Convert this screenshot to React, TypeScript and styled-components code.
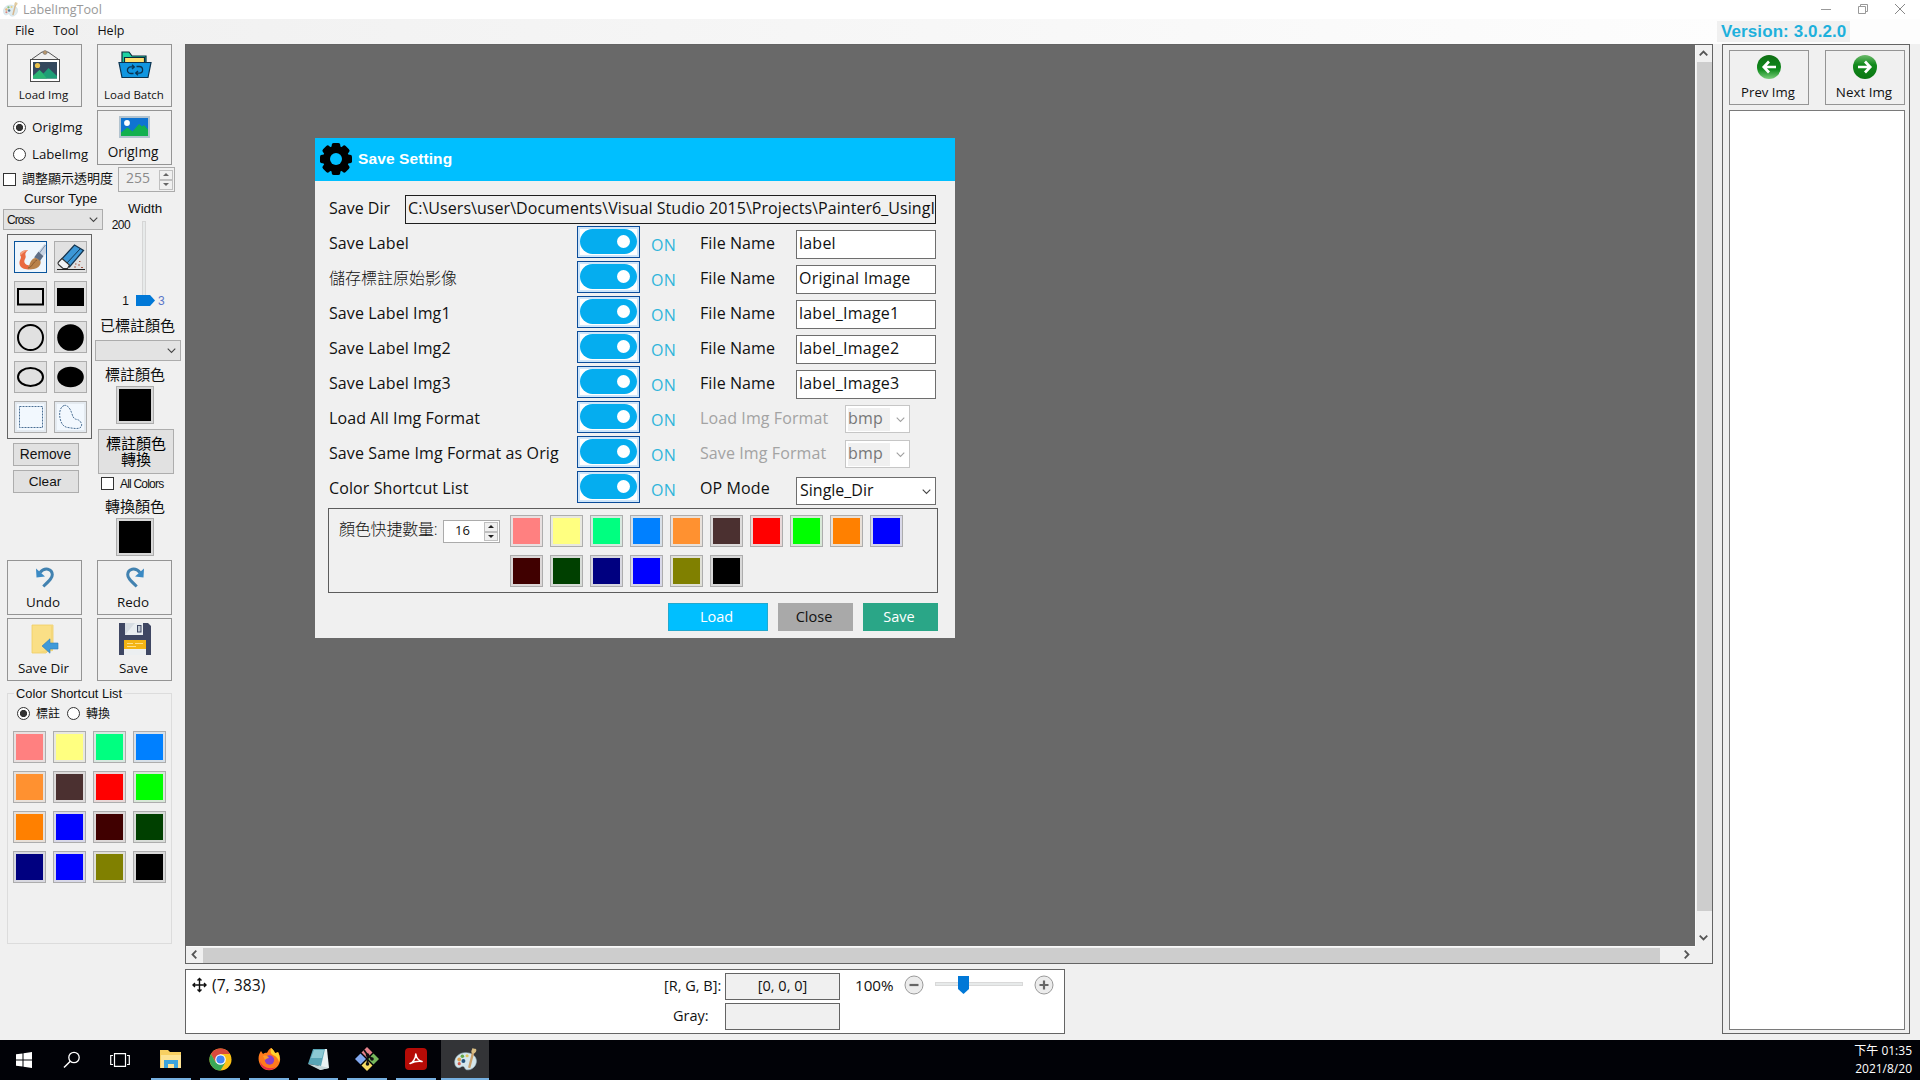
import React from "react";
import styled, { createGlobalStyle } from "styled-components";

const ui = `"Open Sans", "Noto Sans CJK TC", sans-serif`;
const arial = `"Liberation Sans", "Noto Sans CJK TC", sans-serif`;

const Global = createGlobalStyle`
  * { box-sizing: border-box; }
  html, body { margin: 0; padding: 0; background: #f0f0f0; }
  body { width: 1920px; height: 1080px; overflow: hidden; font-family: ${ui}; color: #000; }
  svg { display: block; flex: none; }
`;

type TextProps = { $size?: number; $ls?: number; $color?: string; $weight?: number; $arial?: boolean; $ml?: number; $mr?: number; $mt?: number; $h?: number; $w?: number };
const Text = styled.span<TextProps>`
  display: block;
  flex: none;
  white-space: pre;
  font-family: ${(p) => (p.$arial ? arial : ui)};
  font-size: ${(p) => p.$size ?? 16}px;
  font-weight: ${(p) => p.$weight ?? 400};
  letter-spacing: ${(p) => p.$ls ?? 0}px;
  color: ${(p) => p.$color ?? "#111"};
  line-height: ${(p) => p.$h ?? 20}px;
  height: ${(p) => p.$h ?? 20}px;
  margin-left: ${(p) => p.$ml ?? 0}px;
  margin-right: ${(p) => p.$mr ?? 0}px;
  margin-top: ${(p) => p.$mt ?? 0}px;
  width: ${(p) => (p.$w ? `${p.$w}px` : "auto")};
`;
const TwoLines = styled.span`
  white-space: pre;
  text-align: center;
  font-family: ${ui};
  font-size: 15px;
  line-height: 16px;
  height: 34px;
  color: #000;
`;

const Screen = styled.div`
  width: 1920px;
  height: 1080px;
  display: flex;
  flex-direction: column;
  background: #f0f0f0;
`;
const TitleBar = styled.header`
  height: 19px;
  background: #fff;
  display: flex;
  align-items: center;
  padding: 0 14px 0 3px;
`;
const WindowButtons = styled.div`
  margin-left: auto;
  display: flex;
  gap: 25px;
  padding-bottom: 2px;
`;
const MenuBar = styled.nav`
  height: 25px;
  display: flex;
  align-items: flex-start;
  padding: 2px 70px 0 15px;
  background: linear-gradient(90deg, #f0f0f0 0%, #fdfdfd 90%);
`;
const VersionTag = styled.div`
  margin-left: auto;
  width: 133px;
  height: 21px;
  padding: 1px 0 0 4px;
  background: #f0f0f0;
`;
const Main = styled.main`
  height: 996px;
  display: flex;
`;
const Sidebar = styled.aside`
  width: 185px;
  flex: none;
  display: flex;
  flex-direction: column;
`;
const PairRow = styled.div<{ $h: number }>`
  height: ${(p) => p.$h}px;
  flex: none;
  display: flex;
  align-items: flex-start;
  gap: 15px;
  padding-left: 7px;
`;
const BigButton = styled.button<{ $h: number; $w?: number; $pt: number; $mt?: number }>`
  width: ${(p) => p.$w ?? 75}px;
  height: ${(p) => p.$h}px;
  flex: none;
  border: 1px solid #949494;
  background: #f0f0f0;
  margin: ${(p) => p.$mt ?? 0}px 0 0;
  padding: ${(p) => p.$pt}px 0 0;
  display: flex;
  flex-direction: column;
  align-items: center;
  justify-content: space-between;
`;
const ModeRow = styled.div`
  height: 60px;
  flex: none;
  display: flex;
`;
const Radios = styled.div`
  width: 97px;
  flex: none;
  padding: 10px 0 0 13px;
  display: flex;
  flex-direction: column;
  gap: 7px;
`;
const Line = styled.div<{ $h?: number; $pl?: number; $gap?: number }>`
  display: flex;
  align-items: center;
  flex: none;
  height: ${(p) => p.$h ?? 20}px;
  padding-left: ${(p) => p.$pl ?? 0}px;
  gap: ${(p) => p.$gap ?? 0}px;
`;
const Dot = styled.span<{ $on?: boolean; $ml?: number }>`
  width: 13px;
  height: 13px;
  flex: none;
  margin-left: ${(p) => p.$ml ?? 0}px;
  border-radius: 50%;
  border: 1px solid #333;
  background: ${(p) => (p.$on ? "radial-gradient(circle, #333 0 3.2px, #fff 4px)" : "#fff")};
`;
const Check = styled.span`
  width: 13px;
  height: 13px;
  flex: none;
  border: 1px solid #333;
  background: #fff;
`;
const Spinner = styled.div<{ $w: number; $h: number; $bg: string }>`
  width: ${(p) => p.$w}px;
  height: ${(p) => p.$h}px;
  flex: none;
  border: 1px solid #ababab;
  background: ${(p) => p.$bg};
  display: flex;
  align-items: center;
  justify-content: space-between;
  padding: 0 1px 0 7px;
`;
const SpinKeys = styled.div<{ $h: number }>`
  width: 14px;
  display: flex;
  flex-direction: column;
  height: ${(p) => p.$h}px;
`;
const SpinKey = styled.span`
  flex: 1;
  border: 1px solid #c0c0c0;
  background: #f0f0f0;
  display: flex;
  align-items: center;
  justify-content: center;
`;
const Tools = styled.section`
  height: 368px;
  flex: none;
  display: flex;
`;
const ToolsLeft = styled.div`
  width: 95px;
  flex: none;
  display: flex;
  flex-direction: column;
  align-items: flex-start;
`;
const ToolsRight = styled.div`
  width: 90px;
  flex: none;
  display: flex;
  flex-direction: column;
  align-items: flex-start;
`;
const Combo = styled.div<{ $w: number; $h: number; $bg?: string; $bd?: string; $ml?: number; $mt?: number }>`
  width: ${(p) => p.$w}px;
  height: ${(p) => p.$h}px;
  margin-left: ${(p) => p.$ml ?? 0}px;
  margin-top: ${(p) => p.$mt ?? 0}px;
  flex: none;
  border: 1px solid ${(p) => p.$bd ?? "#acacac"};
  background: ${(p) => p.$bg ?? "#e3e3e3"};
  display: flex;
  align-items: center;
  justify-content: space-between;
  padding: 0 4px 0 3px;
`;
const ToolGrid = styled.div`
  margin: 4px 0 0 7px;
  width: 85px;
  height: 205px;
  flex: none;
  border: 1px solid #646464;
  padding: 6px;
  display: grid;
  grid-template-columns: 33px 33px;
  grid-auto-rows: 32px;
  gap: 8px 7px;
`;
const ToolButton = styled.button<{ $active?: boolean; $pale?: boolean }>`
  padding: 0;
  border: 1px solid ${(p) => (p.$active ? "#0a559c" : "#adadad")};
  background: ${(p) => (p.$active ? "#eef6fd" : p.$pale ? "#e4eaf0" : "#e1e1e1")};
  display: flex;
  align-items: center;
  justify-content: center;
`;
const FlatButton = styled.button<{ $w: number; $h: number; $ml: number; $mt: number }>`
  width: ${(p) => p.$w}px;
  height: ${(p) => p.$h}px;
  margin: ${(p) => p.$mt}px 0 0 ${(p) => p.$ml}px;
  flex: none;
  padding: 0;
  border: 1px solid #adadad;
  background: #e1e1e1;
  display: flex;
  flex-direction: column;
  align-items: center;
  justify-content: center;
`;
const Swatch = styled.button<{ $c: string; $w?: number; $h?: number; $ml?: number; $mt?: number }>`
  width: ${(p) => p.$w ?? 33}px;
  height: ${(p) => p.$h ?? 32}px;
  margin: ${(p) => p.$mt ?? 0}px 0 0 ${(p) => p.$ml ?? 0}px;
  flex: none;
  border: 1px solid #adadad;
  padding: 2px;
  background: ${(p) => `color-mix(in srgb, ${p.$c} 6%, #e6e6e6)`};
  display: flex;

  &::before {
    content: "";
    flex: 1;
    background: ${(p) => p.$c};
  }
`;
const WidthSlider = styled.div`
  height: 90px;
  flex: none;
  display: grid;
  grid-template-columns: 36px 23px 20px;
  padding-top: 2px;
`;
const SliderEnds = styled.div<{ $end?: boolean }>`
  display: flex;
  flex-direction: column;
  justify-content: ${(p) => (p.$end ? "flex-end" : "space-between")};
  align-items: ${(p) => (p.$end ? "flex-start" : "flex-end")};
`;
const SliderTrack = styled.div`
  position: relative;
  width: 4px;
  height: 80px;
  margin: 2px 0 0 11px;
  border: 1px solid #d6d6d6;
  background: #e7eaea;
`;
const Thumb = styled.svg`
  position: absolute;
  left: -7px;
  bottom: -6px;
`;
const Group = styled.fieldset`
  margin: 4px 0 0 7px;
  width: 165px;
  height: 259px;
  flex: none;
  border: 1px solid #dcdcdc;
  padding: 0 0 0 5px;
  min-width: 0;
`;
const Legend = styled.legend`
  margin-left: 1px;
  padding: 0 2px;
  height: 17px;
`;
const PaletteGrid = styled.div<{ $cols: number; $mt?: number }>`
  display: grid;
  margin-top: ${(p) => p.$mt ?? 0}px;
  grid-template-columns: repeat(${(p) => p.$cols}, 33px);
  grid-auto-rows: 32px;
  gap: 8px 7px;
`;

const Center = styled.div`
  width: 1528px;
  flex: none;
  display: flex;
  flex-direction: column;
  align-items: flex-start;
  gap: 5px;
`;
const Viewport = styled.section`
  position: relative;
  width: 1528px;
  height: 920px;
  border: 1px solid #646464;
  display: grid;
  grid-template-columns: 1fr 17px;
  grid-template-rows: 1fr 17px;
  background: #f0f0f0;
`;
const Canvas = styled.div`
  background: #696969;
`;
const ScrollV = styled.div`
  display: flex;
  flex-direction: column;
  align-items: center;
  border-left: 1px solid #f8f8f8;
`;
const ScrollH = styled.div`
  display: flex;
  align-items: center;
  border-top: 1px solid #f8f8f8;
`;
const ScrollKey = styled.span<{ $last?: "v" | "h" }>`
  width: 17px;
  height: 17px;
  flex: none;
  margin-top: ${(p) => (p.$last === "v" ? "auto" : 0)};
  margin-left: ${(p) => (p.$last === "h" ? "auto" : 0)};
  padding-right: 1px;
  padding-bottom: 1px;
  display: flex;
  align-items: center;
  justify-content: center;
`;
const BarV = styled.span`
  width: 15px;
  height: 849px;
  background: #cdcdcd;
`;
const BarH = styled.span`
  width: 1457px;
  height: 15px;
  background: #cdcdcd;
`;
const Status = styled.footer`
  width: 880px;
  height: 65px;
  border: 1px solid #646464;
  background: #fff;
  display: flex;
`;
const StatusPos = styled.div`
  width: 472px;
  padding: 5px 0 0 6px;
  display: flex;
  gap: 5px;
`;
const Readouts = styled.div`
  width: 186px;
  display: flex;
  flex-direction: column;
  gap: 3px;
  padding-top: 3px;
`;
const Readout = styled.div`
  display: flex;
  align-items: center;
  height: 27px;
`;
const ReadLabel = styled.div`
  width: 67px;
  padding-bottom: 2px;
`;
const ReadBox = styled.div`
  width: 115px;
  height: 27px;
  border: 1px solid #646464;
  background: #f0f0f0;
  display: flex;
  align-items: center;
  justify-content: center;
  padding-bottom: 2px;
`;
const Zoom = styled.div`
  display: flex;
  align-items: center;
  height: 30px;
  padding-left: 11px;
`;
const ZoomTrack = styled.div`
  position: relative;
  width: 88px;
  height: 4px;
  margin: -3px 11px 0;
  background: #e7eaea;
  border: 1px solid #d9d9d9;
`;
const ZoomThumb = styled.svg`
  position: absolute;
  left: 22px;
  top: -7px;
`;
const RightPanel = styled.aside`
  margin-left: 9px;
  width: 188px;
  height: 990px;
  border: 1px solid #646464;
  padding: 5px 4px 3px 6px;
  display: flex;
  flex-direction: column;
  gap: 5px;
`;
const NavRow = styled.div`
  display: flex;
  justify-content: space-between;
  width: 176px;
`;
const FileList = styled.div`
  width: 176px;
  flex: 1;
  border: 1px solid #7a7a7a;
  background: #fff;
`;

const Dialog = styled.section`
  position: absolute;
  left: 129px;
  top: 93px;
  width: 640px;
  height: 500px;
  background: #f0f0f0;
  display: flex;
  flex-direction: column;
`;
const DialogHead = styled.header`
  height: 43px;
  flex: none;
  background: #00bfff;
  display: flex;
  align-items: center;
  padding: 0 0 1px 5px;
  gap: 6px;
`;
const DirRow = styled.div`
  display: flex;
  height: 45px;
  flex: none;
  padding: 14px 0 0 14px;
`;
const DirField = styled.div`
  width: 531px;
  height: 29px;
  border: 1px solid #1e1e1e;
  padding: 2px 1px 0 2px;
  overflow: hidden;
`;
const Setting = styled.div`
  height: 35px;
  flex: none;
  display: grid;
  grid-template-columns: 248px 74px 49px 1fr;
  padding-left: 14px;
  align-items: start;
`;
const ToggleBox = styled.button`
  width: 63px;
  height: 32px;
  padding: 0 0 1px 2px;
  border: 1px solid #0b4c9a;
  background: linear-gradient(#fff, #fff) 2px 2px / 57px 26px no-repeat, #cfe6fa;
  display: flex;
  align-items: center;
`;
const Pill = styled.span`
  width: 57px;
  height: 25px;
  border-radius: 13px;
  background: #05adef;
  display: flex;
  align-items: center;
  justify-content: flex-end;
  padding-right: 7px;
`;
const Knob = styled.span`
  width: 13px;
  height: 13px;
  border-radius: 50%;
  background: #fff;
`;
const Extra = styled.div`
  display: flex;
`;
const NameField = styled.div`
  width: 140px;
  height: 29px;
  margin-top: 4px;
  border: 1px solid #6e6e6e;
  background: #fff;
  padding: 1px 0 0 2px;
`;
const Greyed = styled.span`
  display: block;
  width: 42px;
  height: 23px;
  margin-left: -1px;
  background: #f0f0f0;
`;
const PalettePanel = styled.div`
  margin: 2px 0 0 13px;
  width: 610px;
  height: 85px;
  flex: none;
  border: 1px solid #5c5c5c;
  padding: 6px 0 0 10px;
  display: flex;
`;
const CountBox = styled.div`
  width: 171px;
  display: flex;
  padding-top: 5px;
`;
const Actions = styled.div`
  display: flex;
  justify-content: flex-end;
  gap: 10px;
  padding: 10px 17px 0 0;
`;
const Action = styled.button<{ $w: number; $bg: string; $bd: string }>`
  width: ${(p) => p.$w}px;
  height: 28px;
  padding: 0 3px 0 0;
  border: 1px solid ${(p) => p.$bd};
  background: ${(p) => p.$bg};
  display: flex;
  align-items: center;
  justify-content: center;
`;

const Taskbar = styled.div`
  height: 40px;
  background: #010207;
  display: flex;
`;
const SysKeys = styled.div`
  display: flex;
  width: 142px;
  flex: none;
`;
const SysKey = styled.span`
  width: 48px;
  height: 40px;
  flex: none;
  display: flex;
  align-items: center;
  justify-content: center;
`;
const AppKey = styled.span<{ $active?: boolean }>`
  width: ${(p) => (p.$active ? 48 : 40)}px;
  height: 40px;
  flex: none;
  margin-left: ${(p) => (p.$active ? 5 : 9)}px;
  display: flex;
  align-items: center;
  justify-content: center;
  border-bottom: 2px solid #76b0e0;
  background: ${(p) => (p.$active ? "#333437" : "transparent")};
`;
const Clock = styled.div`
  margin-left: auto;
  padding: 2px 8px 0 0;
  text-align: right;
`;
const Turned = styled.svg<{ $dir: number }>`
  transform: rotate(${(p) => p.$dir}deg);
`;
const Mirrored = styled.svg<{ $flip: boolean }>`
  transform: ${(p) => (p.$flip ? "scaleX(-1)" : "none")};
`;

const Chevron = ({ c = "#444", dir = 0, s = 1.2 }: { c?: string; dir?: number; s?: number }) => (
  <Turned $dir={dir} width="9" height="9" viewBox="0 0 10 10">
    <path d="M0.8 3 L5 7.2 L9.2 3" fill="none" stroke={c} strokeWidth={s} />
  </Turned>
);
const Arrows = ({ h, c = "#444" }: { h: number; c?: string }) => (
  <SpinKeys $h={h}>
    <SpinKey><svg width="6" height="3"><path d="M0 3 L3 0 L6 3Z" fill={c} /></svg></SpinKey>
    <SpinKey><svg width="6" height="3"><path d="M0 0 L3 3 L6 0Z" fill={c} /></svg></SpinKey>
  </SpinKeys>
);

const PaletteIcon = ({ size = 14, faded = false }: { size?: number; faded?: boolean }) => (
  <svg width={size} height={size} viewBox="0 0 22 22" opacity={faded ? 0.75 : 1}>
    <path d="M11 4.5C5 4.5 .7 8.800 .7 13.500c0 4 2.300 6 4.600 5.200 2-.7 2.500-1.900 4.200-.8 1.200.8.600 2.300 2.400 2.800 4.500 1.100 9.500-3 9.500-8.200 0-4.800-4.400-8-10.400-8z" fill="#d4e6ec" stroke="#a9c4cf" strokeWidth=".6" />
    <circle cx="5" cy="11" r="1.800" fill="#e0a04f" /><circle cx="8" cy="7.800" r="1.700" fill="#62a84c" />
    <circle cx="12.500" cy="7.400" r="1.500" fill="#dfc35a" /><circle cx="5" cy="15" r="1.500" fill="#d05c50" />
    <circle cx="9" cy="12.500" r="1.900" fill="#23537d" />
    <path d="M18.500 3.500 L14.500 19" stroke="#c9a06b" strokeWidth="2.200" />
    <path d="M16.800 4.500C16 2.500 17.500 1.500 17.800 0c1 1 2.500.3 3.400 1.300.7 1.500-.6 3.500-2 4z" fill="#d9bd84" />
  </svg>
);
const PictureFrame = () => (
  <svg width="32" height="34" viewBox="0 0 32 34">
    <path d="M3 10 L13 3 L19 3 L29 10" fill="none" stroke="#555" strokeWidth="1" />
    <circle cx="16" cy="3.500" r="2" fill="#b8966c" stroke="#777" strokeWidth=".6" />
    <rect x="1.500" y="10.500" width="29" height="22" fill="#fff" stroke="#4b4b4b" />
    <rect x="4" y="13" width="24" height="16.500" fill="#34495e" />
    <circle cx="8.500" cy="16.500" r="2.600" fill="#e8c14d" />
    <path d="M4 29.500V27l6.500-6 4 3.500 5-5.500L28 27v2.500z" fill="#1e9e76" />
    <path d="M4 29.500V27l6.500-6L18 29.500z" fill="#2bb673" />
  </svg>
);
const BatchFolder = () => (
  <svg width="34" height="30" viewBox="0 0 34 30">
    <path d="M4 14V2h7l3 4h14v9z" fill="#1ed3a2" stroke="#0b2a3c" strokeWidth="1.200" />
    <path d="M6.500 13V7.500h20V13" fill="#ffe070" stroke="#0b2a3c" strokeWidth="1.200" />
    <path d="M1 12.500h32l-3 15H4z" fill="#1196e0" stroke="#0b3350" strokeWidth="1.200" />
    <path d="M15.500 23.500h-2.700a3.300 3.300 0 0 1-.2-6.600h3.200M18.500 16.500h2.700a3.300 3.300 0 0 1 .2 6.600h-3.200M14 14.700l2.300 2.200-2.300 2.100M20 21l-2.300 2.100 2.300 2.200" fill="none" stroke="#0b3350" strokeWidth="1.300" />
  </svg>
);
const Photo = () => (
  <svg width="31" height="22" viewBox="0 0 31 22">
    <rect x="1" y="1" width="29" height="20" fill="#0f74d1" stroke="#b2c3cf" strokeWidth="2" />
    <circle cx="8" cy="7" r="2.900" fill="#fff" />
    <path d="M2 20v-3.500l6.500-5 5 4L20 8l3 2.500L25 9l4 4.500V20z" fill="#12b04f" />
  </svg>
);
const TurnArrow = ({ flip = false }: { flip?: boolean }) => (
  <Mirrored $flip={flip} width="20" height="22" viewBox="0 0 20 22">
    <path d="M5 6.500C10 .5 17 3 17.300 8.500c.1 3-1.800 5-9 12" fill="none" stroke="#4282b0" strokeWidth="3" />
    <path d="M1 2.500L1.500 11.500L10 10.500Z" fill="#3b8ac4" />
  </Mirrored>
);
const FolderArrow = () => (
  <svg width="28" height="30" viewBox="0 0 28 30">
    <path d="M1 1h21v21l-7 7H1z" fill="#fadf86" stroke="#f0cd62" strokeWidth=".8" />
    <path d="M4 29L22 27V1h-2v24z" fill="#f4d77a" />
    <path d="M11 22l8-7.200v4.200h8v6h-8v4.200z" fill="#3f9ad9" stroke="#2e7db8" strokeWidth=".6" />
  </svg>
);
const Floppy = () => (
  <svg width="32" height="32" viewBox="0 0 32 32">
    <path d="M0 0h29l3 3v29H0z" fill="#3f4763" />
    <rect x="6" y="0" width="18" height="12" fill="#d7dde3" /><path d="M6 12L16 0h8v12z" fill="#e9edf0" />
    <rect x="18.500" y="2.500" width="3.500" height="6.500" fill="#c3cbd3" stroke="#3f4763" />
    <rect x="5" y="17" width="22" height="15" fill="#eceff1" /><rect x="5" y="17" width="22" height="9" fill="#f3b414" />
    <path d="M8 20.500h6M16 20.500h8M8 23.500h9" stroke="#ffe08a" strokeWidth="1.200" />
  </svg>
);
const Brush = () => (
  <svg width="30" height="29" viewBox="0 0 30 29">
    <path d="M12 7C6 7 2.500 10.500 4.500 13c1.500 2-1.500 4-1 7.500.5 6 9 7 14 5l1-4c-4 2-9 1-10-2-1-3 2-4 1-7-.5-2 0-3 2.500-5.500z" fill="#ea6a41" />
    <path d="M12 7C7 7 3 9.500 4.500 12.500c2-2 4-4 7.500-5.500z" fill="#f3a384" />
    <path d="M11 25.500c3-1 2-9 8-10.500 4.500-.5 7 3 5 7-2.500 4.500-9 5-13 3.500z" fill="#b9824a" />
    <path d="M12 25c4-.5 5-6 9-8" fill="none" stroke="#8a5a30" strokeWidth="1" />
    <path d="M18 14.500l4.500-6 5 4.500-3.500 5c-1.500-2-3.500-3-6-3.500z" fill="#5f6f86" />
    <path d="M22.500 8.500L28.500 1l1.500 1v8l-2.500 3z" fill="#c9d5e4" />
    <path d="M29.500 2l-6 8" stroke="#7d90ab" strokeWidth="1" />
  </svg>
);
const Eraser = () => (
  <svg width="28" height="28" viewBox="0 0 28 28">
    <path d="M3 18L17.500 2l9 5.500L12.500 24z" fill="#3c97d6" stroke="#14344f" strokeWidth="1.300" />
    <path d="M9 21L23.500 5.500" stroke="#14344f" strokeWidth="1" />
    <path d="M5 15.500l7.500 6.500-2 3.500H6l-4.500-4c-.8-1 0-2.500.500-3z" fill="#f2f4f6" stroke="#333" strokeWidth="1.100" />
    <path d="M0 26.500h28" stroke="#222" strokeWidth="1" /><path d="M17 24h2M21 22h2M24 24.500h2M22 18.500h1.500M18 21h1.500" stroke="#a65a48" strokeWidth="1.200" />
  </svg>
);
const shapes = [
  <Brush key="b" />,
  <Eraser key="e" />,
  <svg key="r" width="29" height="20"><rect x="2" y="2" width="25" height="15.500" fill="none" stroke="#000" strokeWidth="2" /></svg>,
  <svg key="rf" width="29" height="20"><rect x="1" y="1" width="27" height="18" /></svg>,
  <svg key="c" width="29" height="29"><circle cx="14.500" cy="14.500" r="12.500" fill="none" stroke="#000" strokeWidth="2" /></svg>,
  <svg key="cf" width="29" height="29"><circle cx="14.500" cy="14.500" r="13.300" /></svg>,
  <svg key="o" width="29" height="22"><ellipse cx="14.500" cy="11" rx="12.500" ry="9" fill="none" stroke="#000" strokeWidth="2" /></svg>,
  <svg key="of" width="29" height="22"><ellipse cx="14.500" cy="11" rx="13.300" ry="10.300" /></svg>,
  <svg key="s" width="27" height="26"><rect width="27" height="26" fill="#f2f8fe" /><rect x="2.500" y="2.500" width="23" height="21" fill="none" stroke="#4a6f94" strokeDasharray="2 1" /></svg>,
  <svg key="l" width="27" height="26"><rect width="27" height="26" fill="#f2f8fe" /><path d="M7 1.500C3 3 2 9 3 14c1 5 3 9 8 9.500 5 .8 11 2 13-.5 2-3-1-7-4-7.500-4-.7-4-3-5.500-7C13 4 10 .5 7 1.500z" fill="none" stroke="#4a6f94" strokeDasharray="2 1" /></svg>,
];
const Gear = () => (
  <svg width="32" height="32" viewBox="-16 -16 32 32">
    {[0, 45, 90, 135].map((a) => (
      <rect key={a} x="-4.300" y="-16" width="8.600" height="32" rx="2" transform={`rotate(${a})`} />
    ))}
    <circle r="13.200" /><circle r="6" fill="#00bfff" />
  </svg>
);
const GreenArrow = ({ right = false }: { right?: boolean }) => (
  <Mirrored $flip={right} width="24" height="24" viewBox="0 0 24 24">
    <defs>
      <linearGradient id="orb" x1="0" y1="0" x2="0" y2="1">
        <stop offset="0" stopColor="#0f6e14" /><stop offset=".6" stopColor="#0f8a1b" /><stop offset="1" stopColor="#7ccf7c" />
      </linearGradient>
      <linearGradient id="orb2" x1="0" y1="0" x2="0" y2="1">
        <stop offset="0" stopColor="#6dbb6d" /><stop offset=".4" stopColor="#128a1c" /><stop offset="1" stopColor="#0a7612" />
      </linearGradient>
    </defs>
    <circle cx="12" cy="12" r="12" fill={right ? "url(#orb2)" : "url(#orb)"} />
    <path d="M12 6.500L6.800 12L12 17.500M7 12h12" fill="none" stroke="#fff" strokeWidth="2.700" />
  </Mirrored>
);
const RoundSign = ({ plus = false }: { plus?: boolean }) => (
  <svg width="20" height="20" viewBox="0 0 20 20">
    <circle cx="10" cy="10" r="9" fill="#ececec" stroke="#9a9a9a" />
    <path d={plus ? "M5.500 10h9M10 5.500v9" : "M5.500 10h9"} stroke="#666" strokeWidth="2.200" />
  </svg>
);

const apps = [
  <svg key="ex" width="22" height="20" viewBox="0 0 22 20"><path d="M0 1h8l2 2h11v16H0z" fill="#f7cf62" /><path d="M1 6h20v13H1z" fill="#fde394" /><path d="M4 19v-8h14v8h-4v-4H8v4z" fill="#3ba4dc" /></svg>,
  <svg key="ch" width="23" height="23" viewBox="-12 -12 24 24"><circle r="11.500" fill="#fbc116" /><path d="M-9.960-5.750A11.500 11.500 0 0 1 9.960-5.750L0-5.750L-5 3z" fill="#d94a3c" /><path d="M-9.960-5.750A11.500 11.500 0 0 0 0 11.500L5 3L-5 3z" fill="#3aa757" /><circle r="5.500" fill="#fff" /><circle r="4.300" fill="#4285f4" /></svg>,
  <svg key="ff" width="23" height="24" viewBox="0 0 23 24"><path d="M13 1c2 1 3 3 4 5 2 0 3-1 3-1 3 5 3 11-1 15-5 5-13 4-16-1C-.5 14 0 8 3 4l2 3c1-1 3-1.500 4-1.300C10 4 11 2 13 1z" fill="#ff7a1c" /><path d="M13 1c2 1 3 3 4 5 2 0 3-1 3-1 2 4 2 8 1 10-1-4-3-6-6-7-2-1-3-3-2-7z" fill="#ffd32e" /><path d="M2 14c2 6 9 9 16 6-5 5-12 3-15-1z" fill="#e8284c" /><circle cx="11.500" cy="13" r="4.700" fill="#8a3fc9" /><path d="M5 9c3-1 5 0 6 2-2 0-3 1-4 2z" fill="#ff9a2a" /></svg>,
  <svg key="np" width="23" height="22" viewBox="0 0 23 22"><path d="M7 1h13l2 19-9 2z" fill="#e9f1f2" /><path d="M6 1h12l-4 17-13-2z" fill="#58a4b5" /><path d="M7 2h10l-2 8H4z" fill="#8cc8d3" /><path d="M1 16l13 2 8 2-9 2z" fill="#c6d7da" /></svg>,
  <svg key="gt" width="24" height="24" viewBox="0 0 24 24"><path d="M12 0l5.500 5.500L12 11 6.500 5.500z" fill="#e5828c" /><path d="M18.500 6.500L24 12l-5.500 5.500L13 12z" fill="#76b75c" /><path d="M5.500 6.500L11 12l-5.500 5.500L0 12z" fill="#82a9f0" /><path d="M12 13l5.500 5.500L12 24l-5.500-5.500z" fill="#f7dc63" /><path d="M9 3l3.500 5v9M12.500 8l4.500 4" fill="none" stroke="#111" strokeWidth="1.800" /><circle cx="12.500" cy="8" r="1.800" fill="#111" /><circle cx="12.500" cy="17" r="1.800" fill="#111" /><circle cx="17" cy="12" r="1.800" fill="#111" /></svg>,
  <svg key="pdf" width="22" height="22" viewBox="0 0 22 22"><rect width="22" height="22" rx="4" fill="#b50b06" /><path d="M5 15.500c2.500-.5 6-5.500 5.800-9.500.6 4 2.500 6.500 6.200 7.500-3.500-.6-8 .2-12 2z" fill="none" stroke="#fff" strokeWidth="1.600" strokeLinejoin="round" /></svg>,
];

const palette = ["#ff8080", "#ffff80", "#00ff80", "#0080ff", "#ff9130", "#4b3030", "#ff0000", "#00ff00", "#ff8000", "#0000ff", "#400000", "#004000", "#000080", "#0000ff", "#808000", "#000000"];

const rows: { label: string; right: string; kind: "name" | "fmt" | "mode"; value: string }[] = [
  { label: "Save Label", right: "File Name", kind: "name", value: "label" },
  { label: "儲存標註原始影像", right: "File Name", kind: "name", value: "Original Image" },
  { label: "Save Label Img1", right: "File Name", kind: "name", value: "label_Image1" },
  { label: "Save Label Img2", right: "File Name", kind: "name", value: "label_Image2" },
  { label: "Save Label Img3", right: "File Name", kind: "name", value: "label_Image3" },
  { label: "Load All Img Format", right: "Load Img Format", kind: "fmt", value: "bmp" },
  { label: "Save Same Img Format as Orig", right: "Save Img Format", kind: "fmt", value: "bmp" },
  { label: "Color Shortcut List", right: "OP Mode", kind: "mode", value: "Single_Dir" },
];

const SettingRow = ({ label, right, kind, value }: (typeof rows)[number]) => {
  const cjk = label.charCodeAt(0) > 255;
  return (
    <Setting>
      <Text $mt={6} $h={22} $ls={cjk ? 0 : 0.1} $weight={cjk ? 300 : 400}>{label}</Text>
      <ToggleBox><Pill><Knob /></Pill></ToggleBox>
      <Text $mt={8} $h={22} $ls={0.4} $color="#2fb5db">ON</Text>
      <Extra>
        <Text $mt={6} $h={22} $ls={0.1} $w={kind === "fmt" ? 145 : 96} $color={kind === "fmt" ? "#a3a3a3" : "#111"}>{right}</Text>
        {kind === "name" && <NameField><Text $h={22} $ls={0.22}>{value}</Text></NameField>}
        {kind === "fmt" && (
          <Combo $w={65} $h={28} $mt={4} $bg="#fff" $bd="#c6c6c6"><Greyed><Text $h={20} $ls={0.2} $color="#777">{value}</Text></Greyed><Chevron c="#a0a0a0" /></Combo>
        )}
        {kind === "mode" && (
          <Combo $w={140} $h={28} $mt={6} $bg="#fff" $bd="#6e6e6e"><Text $h={20} $mt={-2}>{value}</Text><Chevron /></Combo>
        )}
      </Extra>
    </Setting>
  );
};

const SaveSetting = () => (
  <Dialog>
    <DialogHead>
      <Gear />
      <Text $arial $weight={700} $size={15.5} $ls={0.1} $color="#fff">Save Setting</Text>
    </DialogHead>
    <DirRow>
      <Text $w={76} $h={22} $mt={2}>Save Dir</Text>
      <DirField><Text $h={20} $ls={0.06}>{"C:\\Users\\user\\Documents\\Visual Studio 2015\\Projects\\Painter6_UsingI"}</Text></DirField>
    </DirRow>
    {rows.map((r) => <SettingRow key={r.label} {...r} />)}
    <PalettePanel>
      <CountBox>
        <Text $ls={-0.2} $weight={300} $mt={-1} $h={20} $w={104}>顏色快捷數量:</Text>
        <Spinner $w={57} $h={23} $bg="#fff"><Text $size={13} $h={21} $mt={-2} $ml={4}>16</Text><Arrows h={19} c="#222" /></Spinner>
      </CountBox>
      <PaletteGrid $cols={10}>{palette.map((c, i) => <Swatch key={i} $c={c} />)}</PaletteGrid>
    </PalettePanel>
    <Actions>
      <Action $w={100} $bg="#00bfff" $bd="#22a9cf"><Text $size={14.500} $color="#fff">Load</Text></Action>
      <Action $w={75} $bg="#a9a9a9" $bd="#a9a9a9"><Text $size={14.500}>Close</Text></Action>
      <Action $w={75} $bg="#2aa687" $bd="#2aa687"><Text $size={14.500} $color="#fff">Save</Text></Action>
    </Actions>
  </Dialog>
);

const LeftBar = () => (
  <Sidebar>
    <PairRow $h={63}>
      <BigButton $h={63} $pt={4}><PictureFrame /><Text $size={11.500} $h={22} $mr={2}>Load Img</Text></BigButton>
      <BigButton $h={63} $pt={5}><BatchFolder /><Text $size={11.500} $h={22} $mr={1}>Load Batch</Text></BigButton>
    </PairRow>
    <ModeRow>
      <Radios>
        <Line $gap={6}><Dot $on /><Text $size={13.500}>OrigImg</Text></Line>
        <Line $gap={6}><Dot /><Text $size={13.200}>LabelImg</Text></Line>
      </Radios>
      <BigButton $h={55} $pt={5} $mt={3}><Photo /><Text $size={13.600} $weight={500} $h={24} $mr={3}>OrigImg</Text></BigButton>
    </ModeRow>
    <Line $h={25} $pl={3}>
      <Check /><Text $size={13} $ml={6} $mt={-3} $w={96}>調整顯示透明度</Text>
      <Spinner $w={57} $h={25} $bg="#f0f0f0"><Text $size={14} $mt={-3} $color="#8a8a8a">255</Text><Arrows h={20} c="#666" /></Spinner>
    </Line>
    <Tools>
      <ToolsLeft>
        <Text $arial $size={13.500} $h={14} $ml={24}>Cursor Type</Text>
        <Combo $w={100} $h={21} $ml={3} $mt={3}><Text $arial $size={12} $ls={-0.9}>Cross</Text><Chevron /></Combo>
        <ToolGrid>{shapes.map((s, i) => <ToolButton key={i} $active={i === 0} $pale={i > 7}>{s}</ToolButton>)}</ToolGrid>
        <FlatButton $w={66} $h={23} $ml={13} $mt={4}><Text $arial $size={13.800} $mr={1}>Remove</Text></FlatButton>
        <FlatButton $w={66} $h={23} $ml={13} $mt={4}><Text $arial $size={13.600} $mr={2}>Clear</Text></FlatButton>
      </ToolsLeft>
      <ToolsRight>
        <Text $arial $size={13.400} $h={16} $ml={33} $mt={9}>Width</Text>
        <WidthSlider>
          <SliderEnds>
            <Text $arial $size={12} $ls={-0.6} $mr={1} $h={12}>200</Text>
            <Text $arial $size={12} $mr={2} $h={12}>1</Text>
          </SliderEnds>
          <SliderTrack>
            <Thumb width="19" height="11"><path d="M0 0h14l5 5.500-5 5.500H0z" fill="#0078d7" /></Thumb>
          </SliderTrack>
          <SliderEnds $end><Text $arial $size={12} $h={12} $ml={4} $color="#5a76c8">3</Text></SliderEnds>
        </WidthSlider>
        <Text $size={15} $h={18} $ml={5} $mt={9}>已標註顏色</Text>
        <Combo $w={86} $h={21} $mt={6}><span /><Chevron /></Combo>
        <Text $size={15} $h={18} $ml={10} $mt={4}>標註顏色</Text>
        <Swatch $c="#000" $w={38} $h={38} $ml={21} $mt={3} />
        <FlatButton $w={76} $h={45} $ml={3} $mt={5}><TwoLines>{"標註顏色\n轉換"}</TwoLines></FlatButton>
        <Line $h={19} $pl={6} $gap={6}><Check /><Text $arial $size={12} $ls={-0.8}>All Colors</Text></Line>
        <Text $size={15} $h={18} $ml={10} $mt={4}>轉換顏色</Text>
        <Swatch $c="#000" $w={38} $h={38} $ml={21} $mt={3} />
      </ToolsRight>
    </Tools>
    <PairRow $h={58}>
      <BigButton $h={55} $pt={5}><TurnArrow /><Text $size={13.400} $h={24} $mr={3}>Undo</Text></BigButton>
      <BigButton $h={55} $pt={5}><TurnArrow flip /><Text $size={13.400} $h={24} $mr={3}>Redo</Text></BigButton>
    </PairRow>
    <PairRow $h={63}>
      <BigButton $h={63} $pt={5}><FolderArrow /><Text $size={13.400} $h={24} $mr={2}>Save Dir</Text></BigButton>
      <BigButton $h={63} $pt={4}><Floppy /><Text $size={13.400} $h={24} $mr={2}>Save</Text></BigButton>
    </PairRow>
    <Group>
      <Legend><Text $arial $size={12.900} $h={17}>Color Shortcut List</Text></Legend>
      <Line $h={23} $pl={4}>
        <Dot $on /><Text $size={12} $ml={6} $w={25}>標註</Text>
        <Dot $ml={6} /><Text $size={12} $ml={6}>轉換</Text>
      </Line>
      <PaletteGrid $cols={4} $mt={6}>{palette.map((c, i) => <Swatch key={i} $c={c} />)}</PaletteGrid>
    </Group>
  </Sidebar>
);

export default function App() {
  return (
    <Screen>
      <Global />
      <TitleBar>
        <PaletteIcon size={15} faded />
        <Text $size={12.600} $ml={5} $h={18} $color="#999">LabelImgTool</Text>
        <WindowButtons>
          <svg width="12" height="12"><path d="M1 6.500h10" stroke="#999" /></svg>
          <svg width="12" height="12"><path d="M1.500 3.500h7v7h-7zM3.500 3.500v-2h7v7h-2" fill="none" stroke="#999" /></svg>
          <svg width="12" height="12"><path d="M1 1l10 10M11 1L1 11" stroke="#888" /></svg>
        </WindowButtons>
      </TitleBar>
      <MenuBar>
        <Text $size={12.200}>File</Text>
        <Text $size={12.500} $ml={19}>Tool</Text>
        <Text $size={12.500} $ml={19}>Help</Text>
        <VersionTag><Text $arial $weight={700} $size={17} $ls={0.1} $color="#1eb0dc">Version: 3.0.2.0</Text></VersionTag>
      </MenuBar>
      <Main>
        <LeftBar />
        <Center>
          <Viewport>
            <Canvas />
            <ScrollV><ScrollKey><Chevron dir={180} s={2} c="#555" /></ScrollKey><BarV /><ScrollKey $last="v"><Chevron s={2} c="#555" /></ScrollKey></ScrollV>
            <ScrollH><ScrollKey><Chevron dir={90} s={2} c="#555" /></ScrollKey><BarH /><ScrollKey $last="h"><Chevron dir={-90} s={2} c="#555" /></ScrollKey></ScrollH>
            <SaveSetting />
          </Viewport>
          <Status>
            <StatusPos>
              <svg width="15" height="20" viewBox="0 -2.500 15 20"><path d="M7.500 1v13M1 7.500h13M5.500 3L7.500 1l2 2M5.500 12l2 2 2-2M3 5.500L1 7.500l2 2M12 5.500l2 2-2 2" fill="none" stroke="#111" strokeWidth="1.400" /></svg>
              <Text $size={15.700}>(7, 383)</Text>
            </StatusPos>
            <Readouts>
              <Readout><ReadLabel><Text $size={14.500} $ml={6}>[R, G, B]:</Text></ReadLabel><ReadBox><Text $size={14.500}>[0, 0, 0]</Text></ReadBox></Readout>
              <Readout><ReadLabel><Text $size={14.500} $ml={15}>Gray:</Text></ReadLabel><ReadBox /></Readout>
            </Readouts>
            <Zoom>
              <Text $size={15.200} $w={49}>100%</Text>
              <RoundSign />
              <ZoomTrack><ZoomThumb width="11" height="18"><path d="M0 0h11v13l-5.500 5L0 13z" fill="#0078d7" /></ZoomThumb></ZoomTrack>
              <RoundSign plus />
            </Zoom>
          </Status>
        </Center>
        <RightPanel>
          <NavRow>
            <BigButton $h={55} $w={80} $pt={4}><GreenArrow /><Text $size={13.200} $h={24} $mr={2}>Prev Img</Text></BigButton>
            <BigButton $h={55} $w={80} $pt={4}><GreenArrow right /><Text $size={13.400} $h={24} $mr={2}>Next Img</Text></BigButton>
          </NavRow>
          <FileList />
        </RightPanel>
      </Main>
      <Taskbar>
        <SysKeys>
          <SysKey><svg width="16" height="16" viewBox="0 0 16 16"><path d="M0 2.300L6.500 1.400V7.500H0zM7.500 1.200L16 0v7.500H7.500zM0 8.500h6.500v6.100L0 13.700zM7.500 8.500H16V16l-8.500-1.200z" fill="#fff" /></svg></SysKey>
          <SysKey><svg width="18" height="18" viewBox="0 0 18 18"><circle cx="11" cy="6.500" r="5.200" fill="none" stroke="#fff" strokeWidth="1.300" /><path d="M7.300 10.300L1 16.500" stroke="#fff" strokeWidth="1.500" /></svg></SysKey>
          <SysKey><svg width="20" height="14" viewBox="0 0 20 14"><path d="M4.500.7h11v12.600h-11zM3 2.500H.7v9H3M17 2.500h2.300v9H17" fill="none" stroke="#fff" strokeWidth="1.200" /></svg></SysKey>
        </SysKeys>
        {apps.map((a, i) => <AppKey key={i}>{a}</AppKey>)}
        <AppKey $active><PaletteIcon size={23} /></AppKey>
        <Clock>
          <Text $size={12} $color="#fff" $h={18}>下午 01:35</Text>
          <Text $size={12} $color="#fff" $h={18}>2021/8/20</Text>
        </Clock>
      </Taskbar>
    </Screen>
  );
}
